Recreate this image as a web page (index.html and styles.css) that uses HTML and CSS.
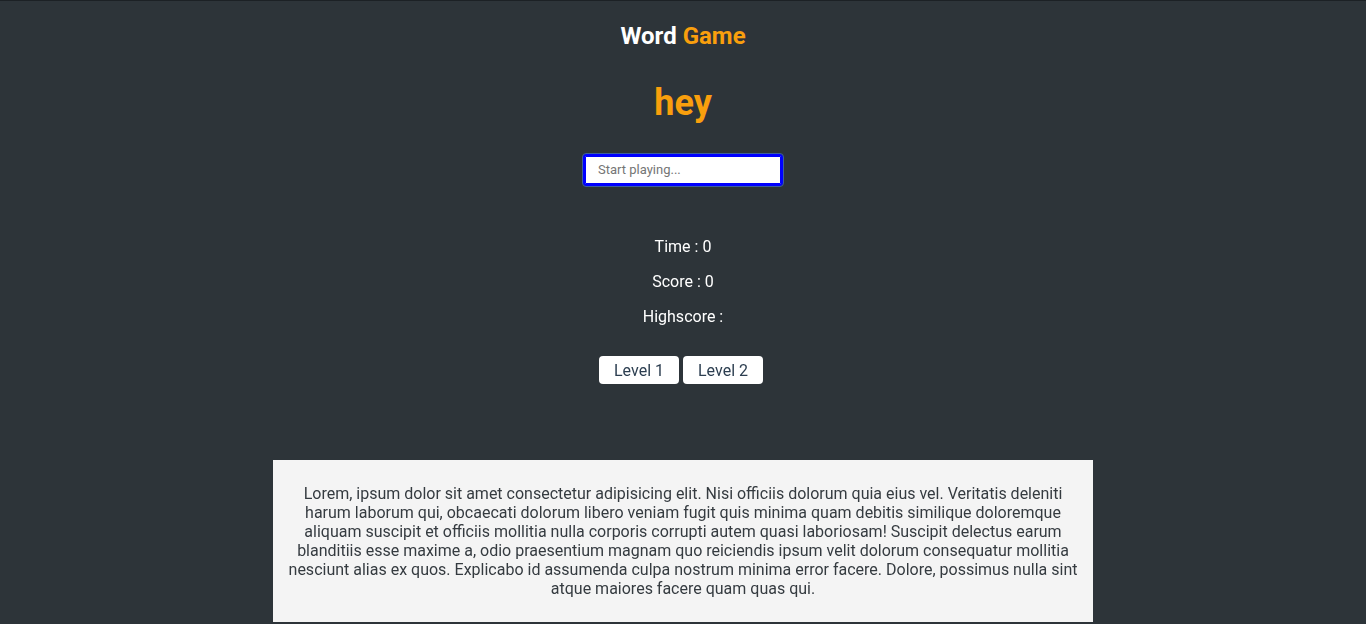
FILE: index.html
```html
<!DOCTYPE html>
<html lang="en">
<head>
<meta charset="utf-8">
<title>Word Game</title>
<link rel="stylesheet" href="styles.css">
</head>
<body>
<main class="game">
  <h1 class="title">Word <span class="accent">Game</span></h1>
  <h2 class="word">hey</h2>
  <input class="entry" type="text" placeholder="Start playing..." autofocus>
  <div class="stats">
    <p class="stat">Time : 0</p>
    <p class="stat">Score : 0</p>
    <p class="stat">Highscore :</p>
  </div>
  <div class="levels">
    <button class="level">Level 1</button>
    <button class="level">Level 2</button>
  </div>
  <section class="info">
    <p>Lorem, ipsum dolor sit amet consectetur adipisicing elit. Nisi officiis dolorum quia eius vel. Veritatis deleniti harum laborum qui, obcaecati dolorum libero veniam fugit quis minima quam debitis similique doloremque aliquam suscipit et officiis mollitia nulla corporis corrupti autem quasi laboriosam! Suscipit delectus earum blanditiis esse maxime a, odio praesentium magnam quo reiciendis ipsum velit dolorum consequatur mollitia nesciunt alias ex quos. Explicabo id assumenda culpa nostrum minima error facere. Dolore, possimus nulla sint atque maiores facere quam quas qui.</p>
  </section>
</main>
</body>
</html>
```
FILE: styles.css
```css
* { box-sizing: border-box; }
html, body { height: 100%; }
body {
  margin: 0;
  background: #2d3439;
  border-top: 1px solid #1c2125;
  font-family: Roboto, "Liberation Sans", sans-serif;
  color: #fff;
  overflow: hidden;
}
.game {
  display: flex;
  flex-direction: column;
  align-items: center;
  text-align: center;
}
.title {
  margin: 21px 0 0;
  font-size: 24px;
  line-height: 28px;
  font-weight: 700;
}
.accent { color: #f99f0d; }
.word {
  margin: 32px 0 0;
  font-size: 36px;
  line-height: 42px;
  font-weight: 700;
  color: #f99f0d;
}
.entry {
  margin-top: 30px;
  width: 200px;
  height: 32px;
  padding: 0 13px 1px;
  border: 2px solid #0000ff;
  border-radius: 3px;
  outline: 1px solid #3d5f9c;
  outline-offset: 0;
  box-shadow: inset 0 0 0 1px #0000ff;
  font-family: Roboto, "Liberation Sans", sans-serif;
  font-size: 13px;
  color: #333;
  background: #fff;
}
.entry::placeholder { color: #757575; }
.stats {
  margin-top: 51px;
  display: flex;
  flex-direction: column;
  gap: 16px;
}
.stat {
  margin: 0;
  font-size: 16px;
  line-height: 19px;
}
.levels {
  margin-top: 30px;
  padding-right: 4px;
  display: flex;
  gap: 4px;
}
.level {
  width: 80px;
  height: 28px;
  border: none;
  border-radius: 4px;
  background: #fff;
  color: #2c3e50;
  font-family: Roboto, "Liberation Sans", sans-serif;
  font-size: 16px;
}
.info {
  margin-top: 76px;
  width: 820px;
  height: 162px;
  padding: 24px 12px;
  background: #f4f4f4;
  color: #353b40;
}
.info p {
  margin: 0;
  font-size: 16px;
  line-height: 19px;
}
```
